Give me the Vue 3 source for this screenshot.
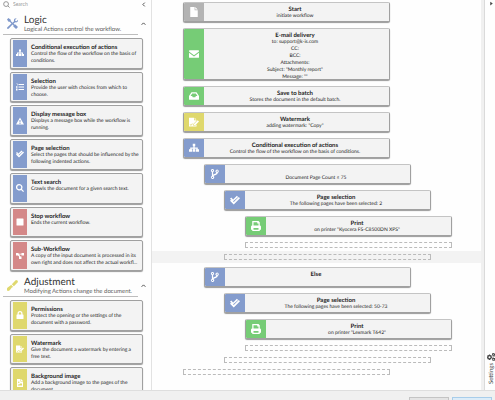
<script setup>
import { ref, h } from 'vue'

const query = ref('')

const shapes = {
  sitemap: 'M6 1h4v4H9v2h5v3h2v4h-5v-4h1V9H9v1h1v4H6v-4h1V9H4v1h1v4H0v-4h2V7h5V5H6z',
  list: 'M1 1h2v4H2V2H1zM0 6.500h3v3H0zM0 11h3v4H0zM5 2h11v2H5zM5 7h11v2H5zM5 12h11v2H5z',
  warning: 'M8 1l8 14H0zM7 6v5h2V6zM7 12v2h2v-2z',
  checks: 'M2 4l3 3 6-6 2 2-8 7-5-4zM0 9l2-2 4 4 8-8 2 2L6 15z',
  search: 'M6.500 0a6.500 6.500 0 0 1 5.300 10.200L16 14.300 14.300 16l-4.200-4.200A6.500 6.500 0 1 1 6.500 0zM6.500 2.500a4 4 0 1 0 0 8 4 4 0 0 0 0-8z',
  stop: 'M2 1h12q1 0 1 1v12q0 1-1 1H2q-1 0-1-1V2q0-1 1-1z',
  nodes: 'M0 2h5v1.500h6V2h5v5h-5V5H6l3 4h2v5H6V9L4 7H0z',
  lock: 'M2 7h1V5a5 5 0 0 1 10 0v2h1q1 0 1 1v7q0 1-1 1H2q-1 0-1-1V8q0-1 1-1zM5.500 7h5V5a2.500 2.500 0 0 0-5 0z',
  sign: 'M0 1h8v4h4v1L7 11v3h3l2-2v3H0zM9 1l3 3H9zM14 5l2 2-6 6H8v-2zM2 11l1 2 2-3 1 1-3 3-2-2z',
  image: 'M2 0h7v5h5v11H2zM10 0l4 4h-4zM4 13h8v-3l-2-2-3 3-1-1-2 2zM5.500 5a1.500 1.500 0 1 0 0 3 1.500 1.500 0 0 0 0-3z',
  file: 'M2 0h7v5h5v11H2zM10 0l4 4h-4z',
  mail: 'M1 2h14q1 0 1 1v1L8 10 0 4V3q0-1 1-1zM0 6l8 6 8-6v7q0 1-1 1H1q-1 0-1-1z',
  inbox: 'M4 2h8l4 6v5q0 1-1 1H1q-1 0-1-1V8zM5 4L2.500 8H5l1 2h4l1-2h2.500L11 4z',
  branch: 'M4 0a2.500 2.500 0 0 1 1 4.800V9c2-1.500 5-1 5-3.300A2.500 2.500 0 1 1 12.500 5.800C12 10 7 9 5.500 11.300A2.500 2.500 0 1 1 3 11.200V4.800A2.500 2.500 0 0 1 4 0zM4 1.500a1 1 0 1 0 0 2 1 1 0 0 0 0-2zM11.500 2.500a1 1 0 1 0 0 2 1 1 0 0 0 0-2zM4 12.500a1 1 0 1 0 0 2 1 1 0 0 0 0-2z',
  print: 'M2 7V0h10l2 2v5q2 0 2 2v5h-2v2H2v-2H0V9q0-2 2-2zM4 2v5h8V4h-2V2zM4 11v3h8v-3z',
  tools: 'M2 0l3.500 2.500v1.800L8 6.800l2.200-2.200C9.500 2 11.500 0 14 .5L11.800 2.800l.4 1.700 1.700.4L16 2.500c.5 2.700-1.800 4.500-4.200 3.700L9.500 8.300l1.200 1.200 1.500-.2L16 13l-2.800 3-4-3.800.2-1.500L8 9.500l-5.300 5.800C1 16.800-.9 15 .6 13.300L6.500 8 4 5.500H2.200L0 2z',
  brush: 'M13 0q3 0 3 3l-6 6-3-3zM6 7l3 3-2 1-3 4q-3 2-4 0t1-4l4-3z',
  cogs: 'M4 3h2l.5 1.500L8 4l1.500 1.500-.6 1.500 1.100.5v2l-1.500.5.5 1.500L8 13l-1.500-.6L6 14H4l-.5-1.600L2 13 .5 11.500 1 10 0 9.500v-2L1 7 .5 5.500 2 4l1.500.5zM5 6.500a2 2 0 1 0 0 4 2 2 0 0 0 0-4zM11 0h2l1 1 2 0v3l-1 1 1 1-2 1.500-1.500-1L11 7V5L10 3zM13 2.500a1 1 0 1 0 0 2 1 1 0 0 0 0-2zM11 9h2l1 1 2 0v3l-1 1 1 1-2 1-1.500-1L11 16v-2l-1-2zM13 11.500a1 1 0 1 0 0 2 1 1 0 0 0 0-2z'
}

const Glyph = (props) =>
  h('svg', { viewBox: '0 0 16 16', 'aria-hidden': 'true' }, [
    h('path', { d: shapes[props.name], fill: 'currentColor', 'fill-rule': 'evenodd' })
  ])
Glyph.props = ['name']

const sections = [
  {
    title: 'Logic',
    note: 'Logical Actions control the workflow.',
    icon: 'tools',
    tone: 'blue',
    actions: [
      { icon: 'sitemap', tone: 'blue', title: 'Conditional execution of actions', text: 'Control the flow of the workflow on the basis of conditions.' },
      { icon: 'list', tone: 'blue', title: 'Selection', text: 'Provide the user with choices from which to choose.' },
      { icon: 'warning', tone: 'blue', title: 'Display message box', text: 'Displays a message box while the workflow is running.' },
      { icon: 'checks', tone: 'blue', title: 'Page selection', text: 'Select the pages that should be influenced by the following indented actions.' },
      { icon: 'search', tone: 'blue', title: 'Text search', text: 'Crawls the document for a given search text.' },
      { icon: 'stop', tone: 'red', title: 'Stop workflow', text: 'Ends the current workflow.' },
      { icon: 'nodes', tone: 'red', title: 'Sub-Workflow', text: 'A copy of the input document is processed in its own right and does not affect the actual workfl...' }
    ]
  },
  {
    title: 'Adjustment',
    note: 'Modifying Actions change the document.',
    icon: 'brush',
    tone: 'yellow',
    actions: [
      { icon: 'lock', tone: 'yellow', title: 'Permissions', text: 'Protect the opening or the settings of the document with a password.' },
      { icon: 'sign', tone: 'yellow', title: 'Watermark', text: 'Give the document a watermark by entering a free text.' },
      { icon: 'image', tone: 'yellow', title: 'Background image', text: 'Add a background image to the pages of the document.' }
    ]
  }
]

const steps = [
  { level: 0, icon: 'file', tone: 'grey', title: 'Start', lines: ['initiate workflow'] },
  { level: 0, icon: 'mail', tone: 'green', title: 'E-mail delivery', lines: ['to: support@k-is.com', 'CC:', 'BCC:', 'Attachments:', 'Subject: "Monthly report"', 'Message: ""'] },
  { level: 0, icon: 'inbox', tone: 'green', title: 'Save to batch', lines: ['Stores the document in the default batch.'] },
  { level: 0, icon: 'sign', tone: 'yellow', title: 'Watermark', lines: ['adding watermark: "Copy"'] },
  { level: 0, icon: 'sitemap', tone: 'blue', title: 'Conditional execution of actions', lines: ['Control the flow of the workflow on the basis of conditions.'] },
  { level: 1, icon: 'branch', tone: 'blue', title: '', lines: ['Document Page Count ≤ 75'] },
  { level: 2, icon: 'checks', tone: 'blue', title: 'Page selection', lines: ['The following pages have been selected: 2'] },
  { level: 3, icon: 'print', tone: 'green', title: 'Print', lines: ['on printer "Kyocera FS-C8500DN XPS"'] },
  { level: 3, slot: true },
  { level: 2, slot: true, active: true },
  { level: 1, icon: 'branch', tone: 'blue', title: 'Else', lines: [''] },
  { level: 2, icon: 'checks', tone: 'blue', title: 'Page selection', lines: ['The following pages have been selected: 50-73'] },
  { level: 3, icon: 'print', tone: 'green', title: 'Print', lines: ['on printer "Lexmark T642"'] },
  { level: 3, slot: true },
  { level: 2, slot: true },
  { level: 0, slot: true }
]
</script>

<template>
  <div class="app">
    <div class="body">
      <aside class="palette">
        <div class="search">
          <label for="q"><svg viewBox="0 0 16 16" aria-hidden="true"><circle cx="7" cy="7" r="5.500" /><path d="M11 11l4 4" /></svg></label>
          <input id="q" v-model="query" type="text" placeholder="Search" />
          <button type="button" aria-label="Collapse actions"><svg viewBox="0 0 8 8"><path d="M6 1L3 4l3 3" /></svg></button>
        </div>
        <section v-for="s in sections" :key="s.title">
          <header :class="s.tone">
            <Glyph :name="s.icon" />
            <div>
              <h2>{{ s.title }}</h2>
              <p>{{ s.note }}</p>
            </div>
            <button type="button" :aria-label="'Collapse ' + s.title"><svg viewBox="0 0 8 8"><path d="M1 6l3-3 3 3" /></svg></button>
          </header>
          <ul>
            <li v-for="a in s.actions" :key="a.title">
              <span class="tile" :class="a.tone"><Glyph :name="a.icon" /></span>
              <div>
                <h3>{{ a.title }}</h3>
                <p>{{ a.text }}</p>
              </div>
            </li>
          </ul>
        </section>
      </aside>

      <main>
        <div v-for="(s, i) in steps" :key="i" class="row" :class="['level' + s.level, { active: s.active }]">
          <div v-if="s.slot" class="slot"></div>
          <article v-else>
            <span class="tile" :class="s.tone"><Glyph :name="s.icon" /></span>
            <div class="text" :class="{ long: s.lines.length > 1 }">
              <h3>{{ s.title }}</h3>
              <p v-for="line in s.lines" :key="line">{{ line }}</p>
            </div>
          </article>
        </div>
      </main>

      <aside class="settings">
        <button type="button" aria-label="Expand settings"><svg viewBox="0 0 8 8"><path class="solid" d="M2 1l4 3-4 3z" /></svg></button>
        <a href="#settings"><span>Settings</span><Glyph name="cogs" /></a>
      </aside>
    </div>
    <footer>
      <button type="button" aria-label="Cancel"></button>
      <button type="button" class="primary" aria-label="OK"></button>
    </footer>
  </div>
</template>

<style>
body { margin: 0; overflow: hidden; }
</style>

<style scoped>
* { box-sizing: border-box; }
.app { display: flex; flex-direction: column; height: 100vh; overflow: hidden; background: #f0f0f0; color: #1c1c1c; font: 5px/7px Lato, "Open Sans", sans-serif; text-rendering: geometricPrecision; }
h2, h3, p, ul { margin: 0; padding: 0; }
svg { display: block; flex: none; }
button { padding: 0; border: 0; background: none; color: #444; }
button svg { width: 5px; height: 5px; fill: none; stroke: #444; stroke-width: 1.5px; }
button .solid { fill: #444; stroke: none; }
.body { flex: 1; min-height: 0; display: flex; background: #fefefe; border-bottom: 1px solid #dedede; }

.palette { flex: none; width: 152px; overflow: hidden; border-right: 1px solid #e2e2e2; }
.search { display: flex; align-items: center; gap: 3px; height: 9px; padding: 0 5px 0 3px; }
.search label svg { width: 7px; height: 7px; fill: none; stroke: #888; stroke-width: 2px; }
.search input { flex: 1; min-width: 0; height: 9px; padding: 0; border: 0; outline: 0; background: none; font: 5px/9px Lato, "Open Sans", sans-serif; color: #444; }
.search input::placeholder { color: #999; opacity: 1; }
header { display: flex; align-items: center; gap: 6px; height: 26px; margin: 0 13px 3px 3px; padding: 4px 0 0 4px; border-bottom: 1px solid #bdbdbd; }
header div { flex: 1; min-width: 0; white-space: nowrap; }
header > svg { width: 11px; height: 11px; }
header > button { margin-right: -8px; }
h2 { font-size: 10px; line-height: 12px; font-weight: 400; color: #333; }
header p { font-size: 6px; line-height: 8px; color: #606060; }
header.blue { color: #7f98ca; }
header.yellow { color: #dfd86d; }
section ul { display: grid; grid-auto-rows: 1fr; gap: 3px; height: 233px; margin: 0 8px 0 10px; list-style: none; }
section + section ul { height: 98px; }
section li { display: flex; gap: 4px; padding: 1px 2px; overflow: hidden; background: #f3f3f3; border: 1px solid #a0a0a0; border-radius: 2px; box-shadow: 0 1px 1px #9a9a9a; }
section li .tile { width: 14px; }
section li div { flex: 1; padding-top: 4px; }

.tile { flex: none; display: grid; place-items: center; color: #fff; }
.tile svg { width: 8px; height: 8px; }
.tile.blue { background: #849ccd; }
.tile.red { background: #d48888; }
.tile.yellow { background: #dfd86d; }
.tile.green { background: #76cc76; }
.tile.grey { background: #b3b3b3; }
h3 { font-size: 6px; line-height: 7px; font-weight: 700; }

main { flex: 1; min-width: 0; display: flex; flex-direction: column; gap: 6px; padding-top: 2px; overflow: hidden; }
.row { padding: 0 91px 0 31px; }
.row.level1 { padding: 0 70px 0 52px; }
.row.level2 { padding: 0 50px 0 72px; }
.row.level3 { padding: 0 29px 0 93px; }
.row.active { background: #f3f3f3; margin: -3px 0 -2px; padding-top: 3px; padding-bottom: 3px; }
.slot { height: 6px; border: 1px dashed #bbb; }
article { display: flex; min-height: 20px; overflow: hidden; background: #f3f3f3; border: 1px solid #a0a0a0; border-top-color: #c4c4c4; border-radius: 2px; box-shadow: 0 1px 1px #9a9a9a; }
article .tile { width: 20px; }
article .tile svg { width: 10px; height: 10px; }
.text { flex: 1; padding: 3px 3px 0 0; text-align: center; white-space: nowrap; }
.text h3 { min-height: 7px; }
.text.long { display: grid; grid-template-rows: 7px; grid-auto-rows: 1fr; height: 50px; padding-bottom: 2px; }

.settings { flex: none; width: 14px; display: flex; flex-direction: column; justify-content: space-between; align-items: center; padding: 1px 0 6px 3px; border-left: 3px solid #f0f0f0; box-shadow: inset 1px 0 #dadada; }
.settings a { display: flex; flex-direction: column-reverse; align-items: center; gap: 2px; color: #444; font-size: 6px; text-decoration: none; }
.settings a span { writing-mode: vertical-rl; transform: rotate(180deg); }
.settings a svg { width: 8px; height: 8px; }

footer { flex: none; display: flex; justify-content: flex-end; gap: 3px; height: 9px; padding: 6px 3px 0 0; }
footer button { width: 40px; height: 16px; border: 1px solid #c4c4c4; background: #e4e4e4; }
footer .primary { border-color: #a8cdea; background: #dcecf8; }
</style>
